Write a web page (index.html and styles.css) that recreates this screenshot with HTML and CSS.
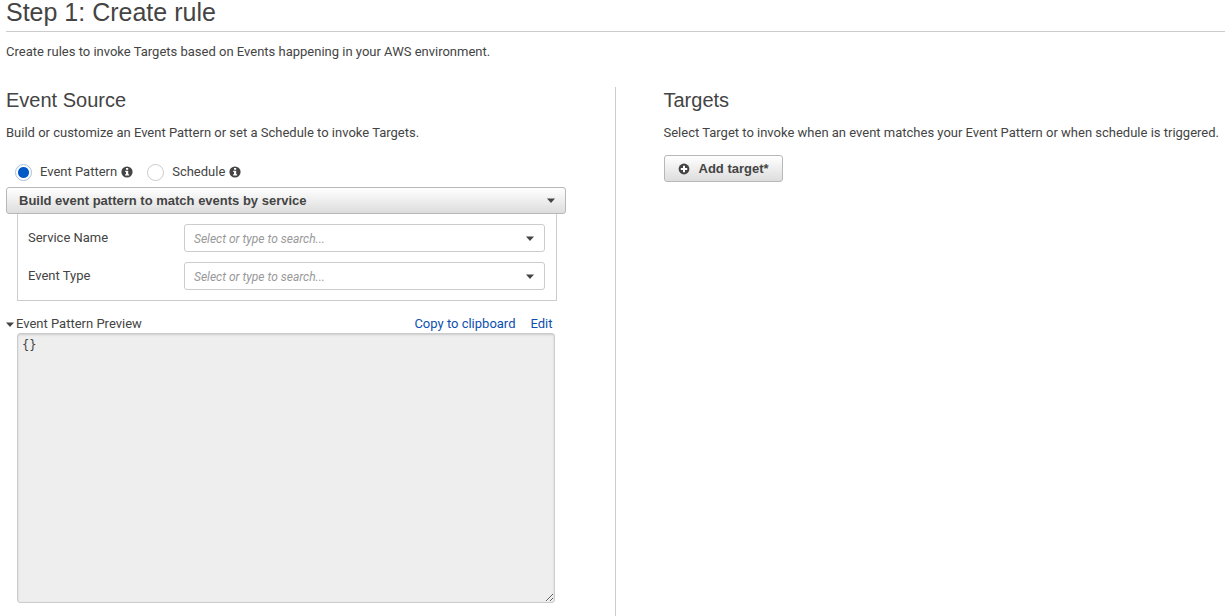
FILE: index.html
```
<!DOCTYPE html>
<html lang="en">
<head>
    <meta charset="UTF-8">
    <meta name="viewport" content="width=device-width, initial-scale=1.0">
    <title>Step 1: Create rule</title>
    <link rel="stylesheet" href="styles.css">
</head>
<body>
    <svg class="sprite" aria-hidden="true">
        <symbol id="info" viewBox="0 0 12 12">
            <circle cx="6" cy="6" r="5.6" fill="#444"/>
            <path d="M5 2h2.2v1.7H5zM4.2 4.7h3v3.5h.9v1.3H4.1V8.2H5V6h-.8z" fill="#fff"/>
        </symbol>
    </svg>

    <header>
        <h1>Step 1: Create rule</h1>
        <p>Create rules to invoke Targets based on Events happening in your AWS environment.</p>
    </header>

    <main class="columns">
        <section class="source">
            <h2>Event Source</h2>
            <p>Build or customize an Event Pattern or set a Schedule to invoke Targets.</p>

            <div class="modes">
                <input type="radio" name="mode" id="mode-pattern" checked>
                <label for="mode-pattern">Event Pattern</label>
                <svg class="info"><use href="#info"/></svg>
                <input type="radio" name="mode" id="mode-schedule">
                <label for="mode-schedule">Schedule</label>
                <svg class="info"><use href="#info"/></svg>
            </div>

            <div class="dropdown">
                <select class="button-face" aria-label="Event pattern builder">
                    <option>Build event pattern to match events by service</option>
                </select>
                <svg class="caret" viewBox="0 0 8 5"><path d="M0 .5h8L4 5z"/></svg>
            </div>

            <div class="panel">
                <div class="field">
                    <label for="service">Service Name</label>
                    <div class="combo">
                        <input type="text" id="service" placeholder="Select or type to search...">
                        <svg class="caret" viewBox="0 0 8 5"><path d="M0 .5h8L4 5z"/></svg>
                    </div>
                </div>
                <div class="field">
                    <label for="type">Event Type</label>
                    <div class="combo">
                        <input type="text" id="type" placeholder="Select or type to search...">
                        <svg class="caret" viewBox="0 0 8 5"><path d="M0 .5h8L4 5z"/></svg>
                    </div>
                </div>
            </div>

            <div class="preview-bar">
                <button type="button" class="toggle">
                    <svg class="caret" viewBox="0 0 8 5"><path d="M0 .5h8L4 5z"/></svg>
                    Event Pattern Preview
                </button>
                <a href="#copy">Copy to clipboard</a>
                <a href="#edit">Edit</a>
            </div>
            <textarea class="preview" aria-label="Event Pattern Preview" readonly>{}</textarea>
        </section>

        <section class="targets">
            <h2>Targets</h2>
            <p>Select Target to invoke when an event matches your Event Pattern or when schedule is triggered.</p>
            <button type="button" class="button-face add">
                <svg class="plus" viewBox="0 0 12 12">
                    <circle cx="6" cy="6" r="5.4" fill="#444"/>
                    <path d="M5 2.8h2V5h2.2v2H7v2.2H5V7H2.8V5H5z" fill="#fff"/>
                </svg>
                Add target*
            </button>
        </section>
    </main>
</body>
</html>
```
FILE: styles.css
```
* {
    box-sizing: border-box;
}
html, body {
    height: 100%;
}
body {
    display: flex;
    flex-direction: column;
    margin: 0;
    padding: 0 6px;
    font: 13px/20px Roboto, "Liberation Sans", sans-serif;
    color: #444;
    background-color: #fff;
}
h1, h2, p {
    margin: 0;
}
h1, h2 {
    font-family: "Liberation Sans", Arial, sans-serif;
    font-weight: normal;
}
h1 {
    padding-bottom: 6px;
    border-bottom: 1px solid #ccc;
    font-size: 25px;
    line-height: 25px;
}
h2 {
    font-size: 20px;
    line-height: 26px;
}
header p {
    margin-top: 10px;
}
input, select, button, textarea {
    margin: 0;
    font: inherit;
    color: inherit;
}
.sprite {
    position: absolute;
    width: 0;
    height: 0;
}
.columns {
    display: grid;
    grid-template-columns: 1fr 1fr;
    flex: 1;
    margin-top: 25px;
}
.source {
    padding-right: 49px;
    border-right: 1px solid #ccc;
}
.source p, .targets p {
    margin-top: 10px;
}
.targets {
    padding-left: 48px;
}
.modes {
    display: flex;
    align-items: center;
    margin-top: 16px;
    padding: 0 0 2px 9px;
    height: 28px;
}
.modes input {
    appearance: none;
    width: 17px;
    height: 17px;
    border: 1px solid #ccc;
    border-radius: 50%;
    background-color: #fff;
}
.modes input:checked {
    border-color: #a9bfd6;
    background: radial-gradient(circle, #0059c4 5px, #fff 6px);
}
.modes label {
    margin-left: 8px;
}
.info {
    width: 12px;
    height: 12px;
    margin: 0 14px 0 4px;
}
.button-face {
    height: 27px;
    border: 1px solid #b8b8b8;
    border-radius: 3px;
    background: linear-gradient(#fff, #ddd);
    font-family: "Liberation Sans", Arial, sans-serif;
    font-weight: bold;
}
.dropdown, .combo {
    display: grid;
    align-items: center;
}
.dropdown > *, .combo > * {
    grid-area: 1 / 1;
}
.dropdown select {
    appearance: none;
    width: 100%;
    padding: 0 12px;
}
.caret {
    width: 8px;
    height: 5px;
    fill: #444;
    pointer-events: none;
}
.dropdown .caret, .combo .caret {
    justify-self: end;
    margin-right: 11px;
}
.panel {
    display: grid;
    gap: 10px;
    margin: 0 9px 0 11px;
    padding: 10px 11px 10px 10px;
    border: 1px solid #ccc;
    border-top: 0;
}
.field {
    display: grid;
    grid-template-columns: 156px 1fr;
    align-items: center;
}
.combo input {
    width: 100%;
    height: 28px;
    padding: 0 9px;
    border: 1px solid #ccc;
    border-radius: 3px;
    background-color: #fff;
}
.combo input::placeholder {
    color: #999;
    font-size: 12px;
    font-style: italic;
}
.preview-bar {
    display: flex;
    gap: 15px;
    margin: 14px 13px 0 0;
    line-height: 18px;
}
.toggle {
    display: flex;
    align-items: center;
    gap: 2px;
    margin-right: auto;
    padding: 0;
    border: 0;
    background: none;
}
a {
    color: #0d4fb0;
    text-decoration: none;
}
.preview {
    display: block;
    width: calc(100% - 22px);
    height: 270px;
    margin-left: 11px;
    padding: 2px 4px;
    border: 1px solid #ccc;
    border-radius: 3px;
    background-color: #eee;
    box-shadow: inset 0 1px 2px #ccc;
    font: 12px/18px "DejaVu Sans Mono", monospace;
}
.add {
    display: flex;
    align-items: center;
    gap: 9px;
    margin-top: 12px;
    padding: 0 13px;
}
.plus {
    width: 12px;
    height: 12px;
}
```
